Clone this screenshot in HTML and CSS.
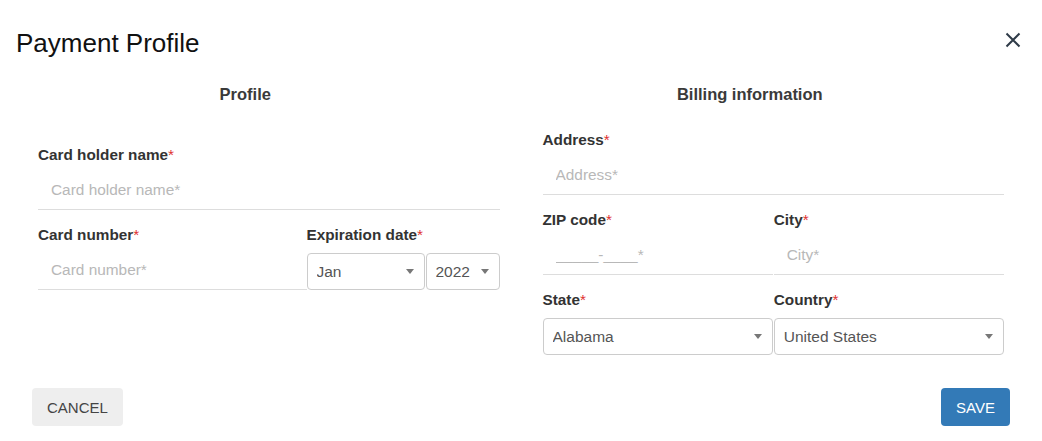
FILE: index.html
```html
<!DOCTYPE html>
<html>

<head>
	<title>Payment Profile</title>
	<link rel="stylesheet" href="styles.css">
</head>

<body>
	<div class="dialog">
		<div class="dialog-header">
			<h1 class="dialog-title">Payment Profile</h1>
			<button type="button" class="close-btn" aria-label="Close">
				<svg width="16" height="16" viewBox="0 0 16 16">
					<path d="M1.5 1.5 L14.5 14.5 M14.5 1.5 L1.5 14.5" stroke="#2f3b48" stroke-width="2" fill="none" />
				</svg>
			</button>
		</div>

		<form class="dialog-body">
			<div class="column">
				<h2 class="section-title">Profile</h2>
				<div class="fields fields-left">
					<div class="field">
						<label for="holder">Card holder name<span class="req">*</span></label>
						<input type="text" id="holder" placeholder="Card holder name*">
					</div>
					<div class="row row-card">
						<div class="field">
							<label for="number">Card number<span class="req">*</span></label>
							<input type="text" id="number" placeholder="Card number*">
						</div>
						<div class="field">
							<label>Expiration date<span class="req">*</span></label>
							<div class="row-exp">
								<div class="select-wrap">
									<select>
										<option>Jan</option>
									</select>
								</div>
								<div class="select-wrap">
									<select>
										<option>2022</option>
									</select>
								</div>
							</div>
						</div>
					</div>
				</div>
			</div>

			<div class="column">
				<h2 class="section-title">Billing information</h2>
				<div class="fields">
					<div class="field">
						<label for="address">Address<span class="req">*</span></label>
						<input type="text" id="address" placeholder="Address*">
					</div>
					<div class="row row-half">
						<div class="field">
							<label for="zip">ZIP code<span class="req">*</span></label>
							<input type="text" id="zip" placeholder="_____-____*">
						</div>
						<div class="field">
							<label for="city">City<span class="req">*</span></label>
							<input type="text" id="city" placeholder="City*">
						</div>
					</div>
					<div class="row row-half">
						<div class="field">
							<label>State<span class="req">*</span></label>
							<div class="select-wrap">
								<select>
									<option>Alabama</option>
								</select>
							</div>
						</div>
						<div class="field">
							<label>Country<span class="req">*</span></label>
							<div class="select-wrap">
								<select>
									<option>United States</option>
								</select>
							</div>
						</div>
					</div>
				</div>
			</div>
		</form>

		<div class="dialog-footer">
			<button type="button" class="btn btn-cancel">Cancel</button>
			<button type="submit" class="btn btn-save">Save</button>
		</div>
	</div>
</body>

</html>
```

FILE: styles.css
```css
body {
	margin: 0;
	padding: 0;
	background-color: #fff;
	color: #333;
	font-family: "Liberation Sans", Arial, sans-serif;
}

.dialog {
	width: 1042px;
}

.dialog-header {
	display: flex;
	justify-content: space-between;
	align-items: flex-start;
	padding: 28px 20px 0 16px;
}

.dialog-title {
	margin: 0;
	font-size: 26px;
	line-height: 30px;
	font-weight: normal;
	color: #111;
}

.close-btn {
	border: none;
	background: none;
	padding: 0;
	margin-top: 4px;
	width: 18px;
	height: 18px;
	cursor: pointer;
}

.dialog-body {
	display: flex;
	gap: 43px;
	padding: 0 38px;
	margin: 26px 0 0;
}

.column {
	flex: 1;
	min-width: 0;
}

.section-title {
	margin: 0;
	padding-right: 47px;
	text-align: center;
	font-size: 16.5px;
	line-height: 20px;
	font-weight: bold;
	color: #3a3a3a;
}

.fields {
	padding-top: 26px;
}

.fields-left {
	padding-top: 41px;
}

.field {
	display: flex;
	flex-direction: column;
	margin-bottom: 15px;
}

.row .field {
	margin-bottom: 0;
}

.row {
	display: grid;
	margin-bottom: 15px;
}

.row-card {
	grid-template-columns: 1fr 193px;
}

.row-half {
	grid-template-columns: 1fr 1fr;
	column-gap: 1px;
}

.row-exp {
	display: grid;
	grid-template-columns: 118px 1fr;
	column-gap: 1px;
	margin-top: 8px;
}

label {
	font-size: 15.3px;
	line-height: 20px;
	font-weight: bold;
	color: #333;
}

.req {
	color: #e0322f;
	font-weight: normal;
}

input[type="text"] {
	box-sizing: border-box;
	height: 39px;
	margin-top: 6px;
	padding: 0 13px;
	border: none;
	border-bottom: 1px solid #ddd;
	font-family: inherit;
	font-size: 15.4px;
	color: #555;
	outline: none;
}

input::placeholder {
	color: #b8b8b8;
}

.select-wrap {
	position: relative;
	margin-top: 8px;
}

.row-exp .select-wrap {
	margin-top: 0;
}

.select-wrap::after {
	content: "";
	position: absolute;
	right: 11px;
	top: 16px;
	border-left: 4px solid transparent;
	border-right: 4px solid transparent;
	border-top: 5px solid #777;
	pointer-events: none;
}

select {
	-webkit-appearance: none;
	appearance: none;
	box-sizing: border-box;
	width: 100%;
	height: 37px;
	padding: 0 24px 0 9px;
	border: 1px solid #ccc;
	border-radius: 4px;
	background-color: #fff;
	font-family: inherit;
	font-size: 15.5px;
	color: #555;
	outline: none;
}

.dialog-footer {
	display: flex;
	justify-content: space-between;
	padding: 18px 32px 0;
}

.btn {
	height: 38px;
	padding: 0 15px;
	border: none;
	border-radius: 4px;
	font-family: inherit;
	font-size: 15px;
	text-transform: uppercase;
	cursor: pointer;
}

.btn-cancel {
	background-color: #eee;
	color: #444;
}

.btn-save {
	background-color: #337ab7;
	color: #fff;
}
```
